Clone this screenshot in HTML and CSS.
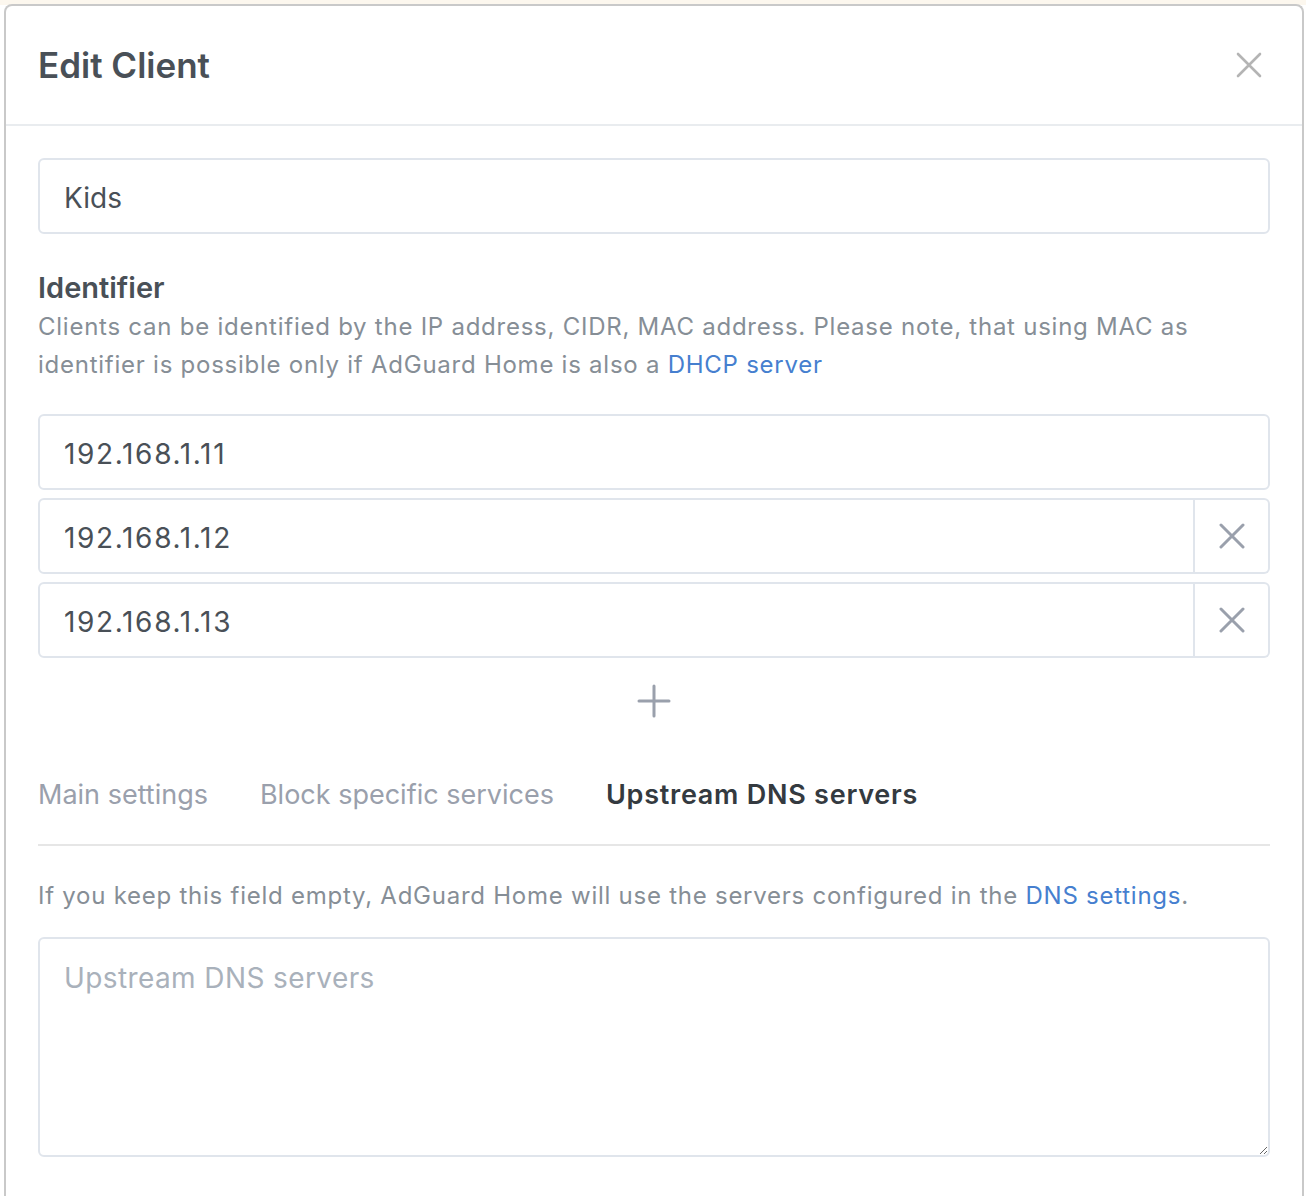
FILE: index.html
```html
<!DOCTYPE html>
<html lang="en">
<head>
<meta charset="utf-8">
<title>Edit Client</title>
<link rel="stylesheet" href="styles.css">
</head>
<body>
<div class="modal">
  <div class="modal-header">
    <h1 class="modal-title">Edit Client</h1>
    <button class="close" type="button" aria-label="Close">
      <svg width="26" height="26" viewBox="0 0 26 26"><path d="M2 2 L24 24 M24 2 L2 24" stroke="currentColor" stroke-width="2.6" stroke-linecap="round" fill="none"/></svg>
    </button>
  </div>
  <div class="modal-body">
    <input class="form-control" type="text" value="Kids">

    <div class="label">Identifier</div>
    <div class="desc">Clients can be identified by the IP address, CIDR, MAC address. Please note, that using MAC as identifier is possible only if AdGuard Home is also a <a href="#">DHCP server</a></div>

    <div class="ids">
      <input class="form-control num" type="text" value="192.168.1.11">
      <div class="input-group">
        <input class="form-control grp num" type="text" value="192.168.1.12">
        <button class="remove" type="button" aria-label="Remove">
          <svg width="26" height="26" viewBox="0 0 26 26"><path d="M2 2 L24 24 M24 2 L2 24" stroke="currentColor" stroke-width="3" stroke-linecap="round" fill="none"/></svg>
        </button>
      </div>
      <div class="input-group">
        <input class="form-control grp num" type="text" value="192.168.1.13">
        <button class="remove" type="button" aria-label="Remove">
          <svg width="26" height="26" viewBox="0 0 26 26"><path d="M2 2 L24 24 M24 2 L2 24" stroke="currentColor" stroke-width="3" stroke-linecap="round" fill="none"/></svg>
        </button>
      </div>
    </div>

    <div class="add-row">
      <button class="add" type="button" aria-label="Add">
        <svg width="34" height="34" viewBox="0 0 34 34"><path d="M17 2 V32 M2 17 H32" stroke="currentColor" stroke-width="3" stroke-linecap="round" fill="none"/></svg>
      </button>
    </div>

    <div class="tabs">
      <span class="tab">Main settings</span>
      <span class="tab">Block specific services</span>
      <span class="tab active">Upstream DNS servers</span>
    </div>

    <div class="hint">If you keep this field empty, AdGuard Home will use the servers configured in the <a href="#">DNS settings</a>.</div>

    <textarea class="form-control textarea" placeholder="Upstream DNS servers"></textarea>
  </div>
</div>
</body>
</html>
```

FILE: styles.css
```css
* { box-sizing: border-box; }
html, body { margin: 0; padding: 0; }
body {
  background: linear-gradient(#fcf7ee 0, #fcf7ee 5px, #ffffff 5px);
  font-family: Inter, "Noto Sans", "Liberation Sans", sans-serif;
  color: #495057;
  overflow: hidden;
  height: 1196px;
}
.modal {
  margin: 4px 0 0 4px;
  width: 1300px;
  min-height: 1200px;
  background: #fff;
  border: 2px solid #c9c9c9;
  border-bottom: none;
  border-radius: 8px 8px 0 0;
}
.modal-header {
  height: 120px;
  border-bottom: 2px solid #e9ecef;
  display: flex;
  align-items: center;
  justify-content: space-between;
  padding: 0 40px 0 32px;
}
.modal-title {
  margin: 0;
  font-size: 35px;
  font-weight: 600;
  color: #495057;
}
.close {
  border: none;
  background: none;
  padding: 0;
  color: #b4b4b4;
  display: flex;
}
.modal-body {
  padding: 32px 32px;
}
.form-control {
  display: block;
  width: 100%;
  height: 76px;
  border: 2px solid #e0e5ec;
  border-radius: 6px;
  padding: 3px 24px 0;
  font-family: inherit;
  font-size: 28px;
  color: #495057;
  background: #fff;
  outline: none;
}
.form-control.num {
  letter-spacing: 1.65px;
}
.label {
  margin-top: 34px;
  font-size: 29px;
  font-weight: 600;
  line-height: 40px;
  color: #495057;
}
.desc {
  font-size: 24px;
  line-height: 38px;
  color: #868e96;
  letter-spacing: 0.75px;
}
a { color: #467fcf; text-decoration: none; }
.ids {
  margin-top: 30px;
  display: flex;
  flex-direction: column;
  gap: 8px;
}
.input-group {
  display: flex;
  height: 76px;
}
.form-control.grp {
  flex: 1;
  border-radius: 6px 0 0 6px;
}
.remove {
  width: 75px;
  flex: none;
  border: 2px solid #e0e5ec;
  border-left: none;
  border-radius: 0 6px 6px 0;
  background: #fff;
  color: #9aa0ac;
  display: flex;
  align-items: center;
  justify-content: center;
  padding: 0;
}
.add-row {
  display: flex;
  justify-content: center;
  padding: 26px 0 24px;
}
.add {
  border: none;
  background: none;
  padding: 0;
  color: #9aa0ac;
  display: flex;
}
.tabs {
  margin-top: 35px;
  display: flex;
  gap: 52px;
  border-bottom: 2px solid #e6e6e6;
  padding-bottom: 31px;
}
.tab {
  font-size: 27px;
  line-height: 36px;
  color: #9aa0ac;
  letter-spacing: 0;
}
.tab.active {
  color: #343a40;
  font-weight: 600;
  letter-spacing: 0.75px;
}
.hint {
  margin-top: 32px;
  font-size: 24px;
  line-height: 36px;
  color: #868e96;
  letter-spacing: 0.75px;
}
.textarea {
  margin-top: 23px;
  height: 220px;
  padding: 20px 24px;
  resize: vertical;
  line-height: 38px;
  letter-spacing: 0.4px;
}
.textarea::placeholder { color: #a9b1bb; }
```
